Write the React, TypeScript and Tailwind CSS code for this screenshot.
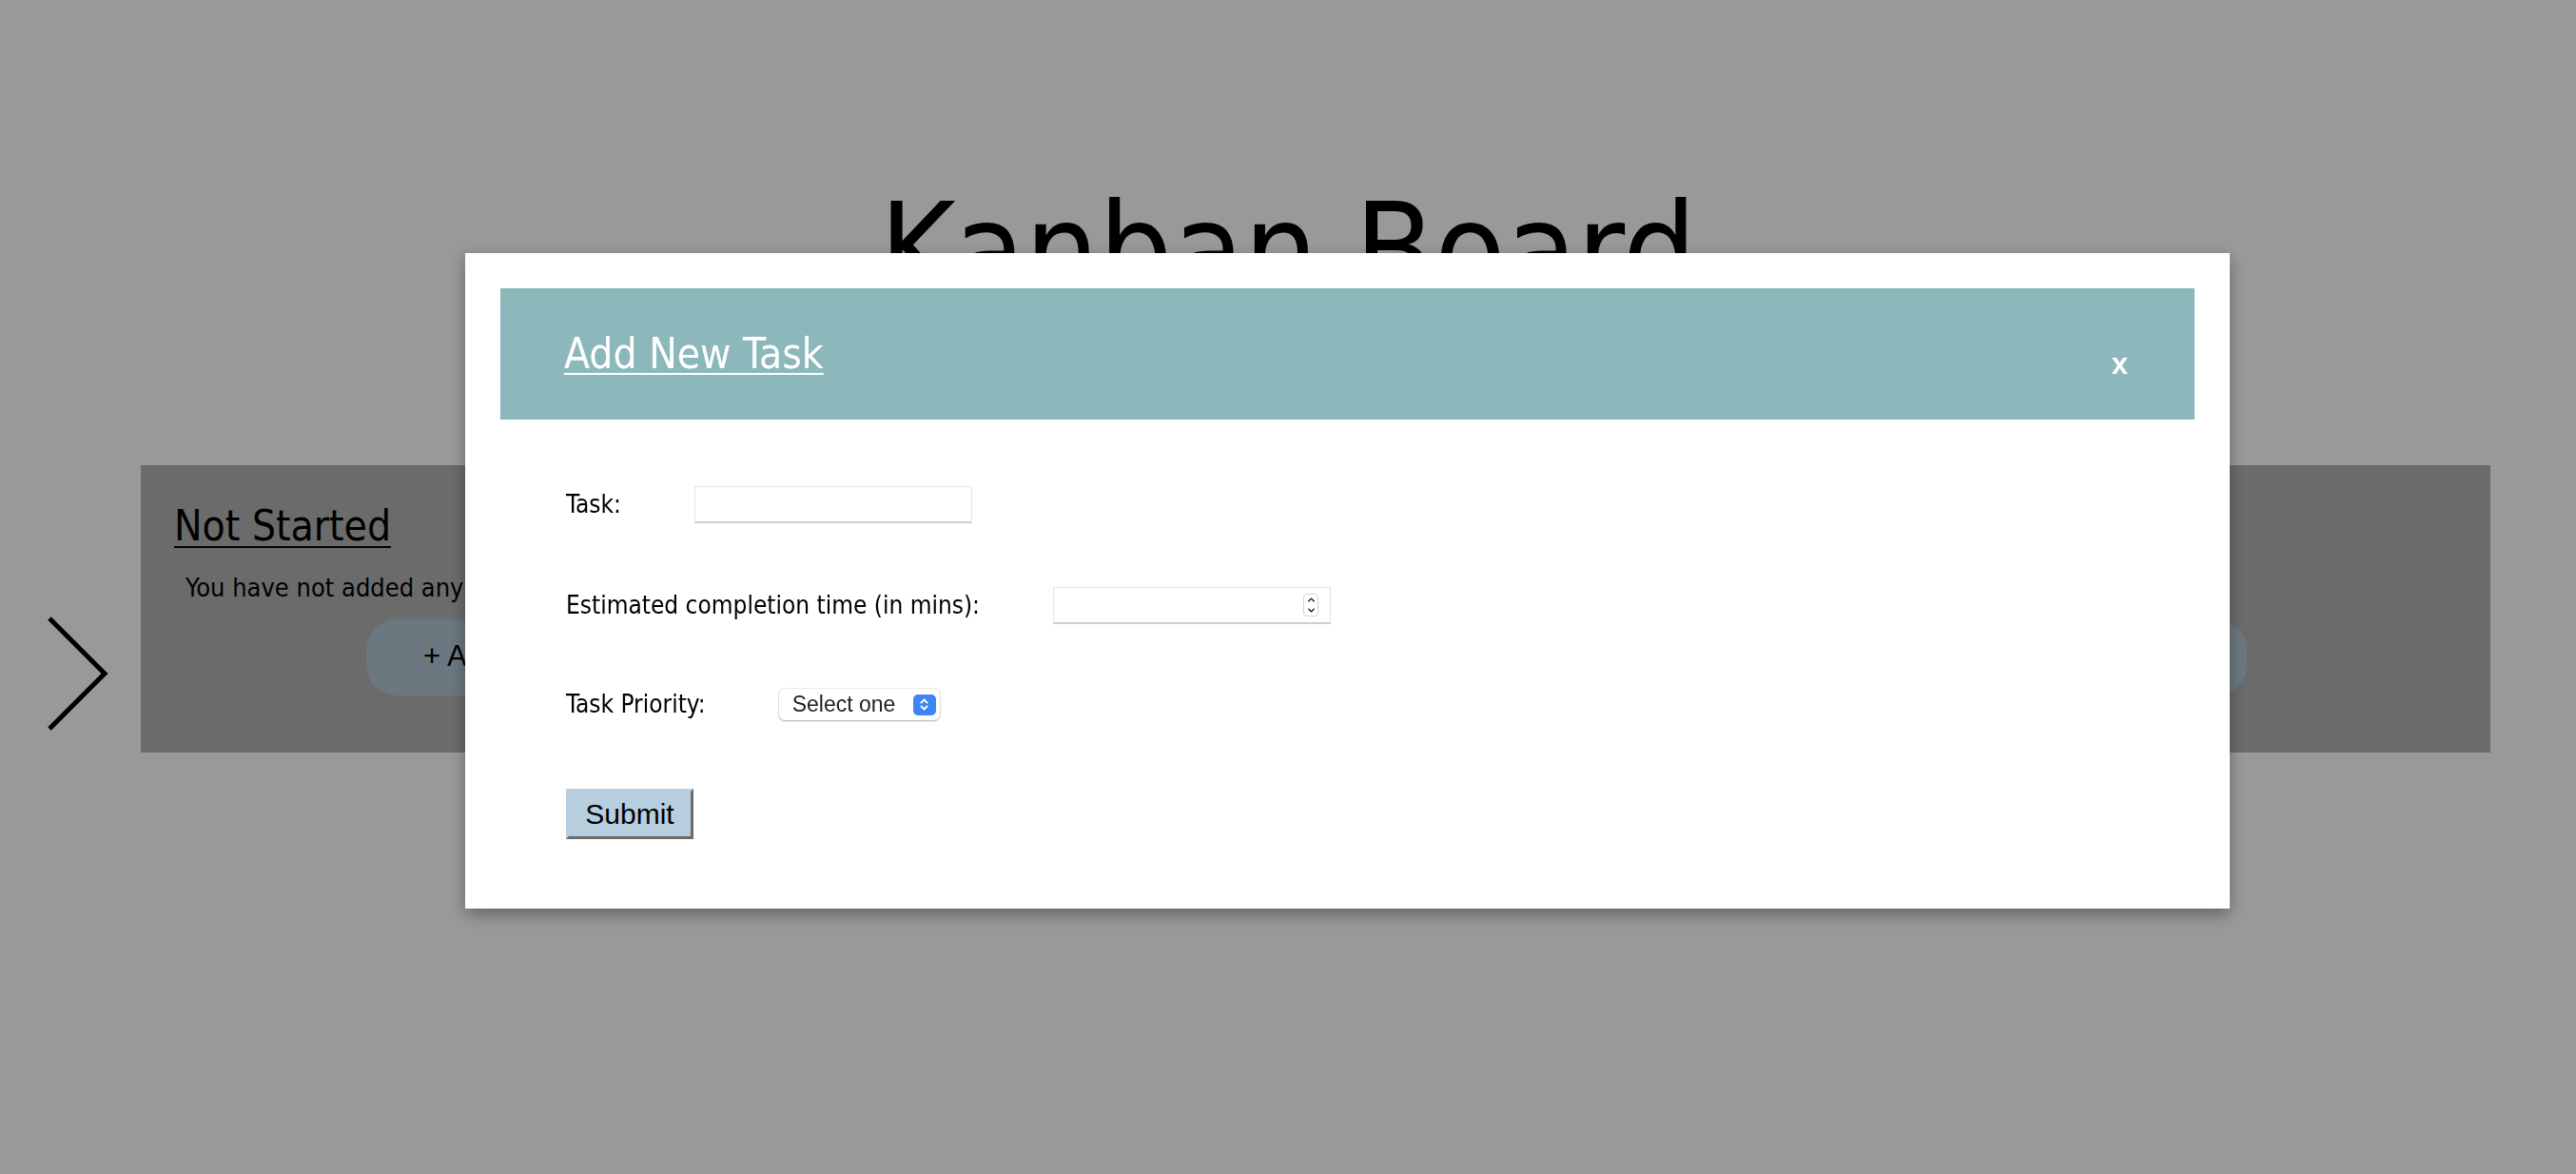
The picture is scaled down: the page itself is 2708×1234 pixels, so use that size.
import { ChevronsUpDown, ChevronUp, ChevronDown } from "lucide-react";

const dosis = "font-['Liberation_Sans_Narrow','DejaVu_Sans_Condensed','Roboto_Condensed',sans-serif]";
const helv = "font-['Liberation_Sans','Arial',sans-serif]";

function Chevron() {
  return (
    <svg width="70" height="124" viewBox="0 0 70 124" className="block">
      <path d="M4 2 L62 60 L4 118" fill="none" stroke="#000" strokeWidth="5" />
    </svg>
  );
}

function FormRow({ label, children, top }: { label: string; children: React.ReactNode; top: string }) {
  return (
    <div className={`flex h-[39px] items-center gap-[77px] ${top}`}>
      <label className={`${dosis} text-[26px] text-black`}>{label}</label>
      {children}
    </div>
  );
}

export default function App() {
  return (
    <div className="relative min-h-screen w-full overflow-hidden bg-white">
      {/* Board page */}
      <h1 className={`${dosis} pt-[195px] text-center text-[136px] font-light leading-none text-black`}>
        Kanban Board
      </h1>

      <div className="mt-[158px] flex items-start pr-[90px]">
        <div className="w-[148px] shrink-0 pl-[48px] pt-[159px]">
          <Chevron />
        </div>
        <section className="h-[302px] flex-1 bg-[#b3b3b3] px-[35px] pt-[36px]">
          <h2 className={`${dosis} text-[44px] leading-[56px] text-black underline decoration-2 underline-offset-[6px]`}>
            Not Started
          </h2>
          <p className={`${dosis} ml-[12px] mt-[17px] text-[27px] text-black`}>
            You have not added any tasks yet.
          </p>
          <button
            className={`${helv} ml-[202px] mt-[12px] flex h-[80px] w-[1977px] items-center rounded-[32px] bg-[#b3c8d5] pl-[60px] text-[31px] text-black`}
          >
            + Add Task
          </button>
        </section>
      </div>

      {/* Overlay */}
      <div className="fixed inset-0 bg-black/40">
        <div className="absolute left-[489px] top-[266px] w-[1855px] bg-white p-[37px] shadow-[0_6px_16px_rgba(0,0,0,0.35)]">
          <div className="flex h-[138px] items-center justify-between bg-[#8cb8bb] pl-[67px] pr-[70px]">
            <h3 className={`${dosis} text-[44px] text-white underline decoration-2 underline-offset-[5px]`}>
              Add New Task
            </h3>
            <button className={`${helv} mt-[20px] text-[31px] font-bold leading-none text-white`}>x</button>
          </div>

          <form className="flex flex-col pb-[36px] pl-[69px]">
            <FormRow label="Task:" top="mt-[70px]">
              <input
                type="text"
                className="h-[39px] w-[292px] border border-b-2 border-[#e6e6e6] border-b-[#cfcfcf] bg-white outline-none"
              />
            </FormRow>

            <FormRow label="Estimated completion time (in mins):" top="mt-[67px]">
              <div className="relative h-[39px] w-[292px]">
                <input
                  type="text"
                  className="h-full w-full border border-b-2 border-[#e6e6e6] border-b-[#cfcfcf] bg-white outline-none"
                />
                <div className="absolute right-[13px] top-[7px] flex h-[24px] w-[16px] flex-col items-center justify-center rounded-[4px] border border-[#d4d4d4] bg-white">
                  <ChevronUp className="size-[11px] text-black" strokeWidth={3} />
                  <ChevronDown className="size-[11px] text-black" strokeWidth={3} />
                </div>
              </div>
            </FormRow>

            <FormRow label="Task Priority:" top="mt-[65px]">
              <div className="flex h-[33px] w-[169px] items-center justify-between rounded-[6px] bg-white pl-[14px] pr-[4px] shadow-[0_0_0_1px_rgba(0,0,0,0.08),0_1px_2px_rgba(0,0,0,0.25)]">
                <span className={`${helv} text-[23px] leading-none text-[#222]`}>Select one</span>
                <span className="flex h-[22px] w-[24px] items-center justify-center rounded-[5px] bg-[#3e86f5]">
                  <ChevronsUpDown className="size-[15px] text-white" strokeWidth={3} />
                </span>
              </div>
            </FormRow>

            <div className="mt-[69px]">
              <button
                type="button"
                className={`${helv} h-[53px] w-[134px] border-[3px] border-b-[#6b6b6b] border-l-[#b7cedf] border-r-[#6b6b6b] border-t-[#b7cedf] bg-[#b7cedf] text-[30px] text-black`}
              >
                Submit
              </button>
            </div>
          </form>
        </div>
      </div>
    </div>
  );
}
